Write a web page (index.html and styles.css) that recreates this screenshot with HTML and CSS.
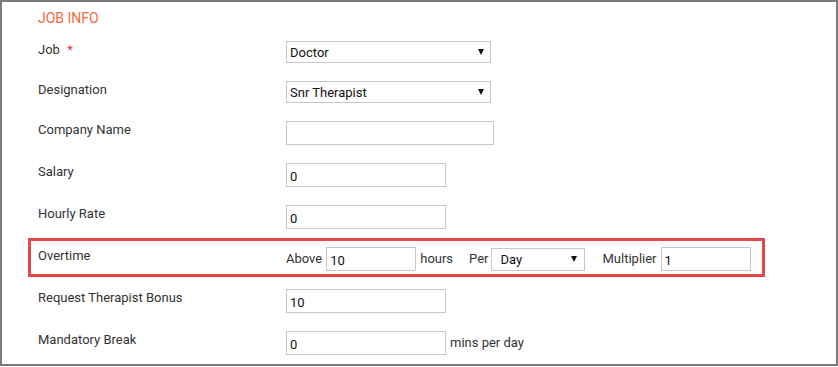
FILE: index.html
```html
<!DOCTYPE html>
<html>
<head>
<meta charset="utf-8">
<link rel="stylesheet" href="styles.css">
</head>
<body>
<div class="panel">
  <div class="heading">JOB INFO</div>

  <div class="row">
    <div class="label">Job <span class="req">*</span></div>
    <div class="ctrl">
      <span class="sel w205"><select><option>Doctor</option></select></span>
    </div>
  </div>

  <div class="row">
    <div class="label">Designation</div>
    <div class="ctrl">
      <span class="sel w205"><select><option>Snr Therapist</option></select></span>
    </div>
  </div>

  <div class="row">
    <div class="label">Company Name</div>
    <div class="ctrl"><input class="txt w208" type="text" value=""></div>
  </div>

  <div class="row">
    <div class="label">Salary</div>
    <div class="ctrl"><input class="txt w160" type="text" value="0"></div>
  </div>

  <div class="row">
    <div class="label">Hourly Rate</div>
    <div class="ctrl"><input class="txt w160" type="text" value="0"></div>
  </div>

  <div class="row overtime">
    <div class="label">Overtime</div>
    <div class="ctrl">
      <span class="word">Above</span>
      <input class="txt w90" type="text" value="10">
      <span class="word">hours</span>
      <span class="word per">Per</span>
      <span class="sel w94 pad"><select><option>Day</option></select></span>
      <span class="word mult">Multiplier</span>
      <input class="txt w90" type="text" value="1">
    </div>
  </div>

  <div class="row after">
    <div class="label">Request Therapist Bonus</div>
    <div class="ctrl"><input class="txt w160" type="text" value="10"></div>
  </div>

  <div class="row">
    <div class="label">Mandatory Break</div>
    <div class="ctrl">
      <input class="txt w160" type="text" value="0">
      <span class="word">mins per day</span>
    </div>
  </div>
</div>
</body>
</html>
```

FILE: styles.css
```css
html, body {
  margin: 0;
  padding: 0;
  background: #ffffff;
}

.panel {
  box-sizing: border-box;
  width: 838px;
  height: 366px;
  border: 2px solid #7a7a7a;
  padding: 8px 0 0 26px;
  overflow: hidden;
  font-family: Roboto, "Liberation Sans", Arial, sans-serif;
  font-size: 13px;
  color: #333333;
}

.heading {
  padding-left: 10px;
  font-size: 14px;
  line-height: 16px;
  color: #f26a3b;
}

.row {
  box-sizing: border-box;
  width: 737px;
  display: flex;
  align-items: flex-start;
  padding-left: 10px;
  margin-top: 18px;
}

.heading + .row {
  margin-top: 15px;
}

.row.overtime {
  margin-top: 9px;
  border: 3px solid #e5484a;
  padding: 6px 0 3px 7px;
}

.row.after {
  margin-top: 12px;
}

.label {
  width: 248px;
  flex: none;
  line-height: 16px;
  padding-top: 1px;
}

.req {
  color: #e8323c;
  margin-left: 4px;
}

.ctrl {
  display: flex;
  align-items: center;
}

.txt {
  box-sizing: border-box;
  height: 24px;
  margin: 0;
  border: 1px solid #c8c8c8;
  border-radius: 0;
  padding: 2px 0 0 3px;
  background: #ffffff;
  font-family: Roboto, "Liberation Sans", Arial, sans-serif;
  font-size: 13px;
  color: #111111;
  outline: none;
}

.w208 { width: 208px; }
.w160 { width: 160px; }
.w90 { width: 90px; }

.sel {
  position: relative;
  display: inline-block;
  height: 22px;
}

.sel select {
  box-sizing: border-box;
  width: 100%;
  height: 22px;
  margin: 0;
  border: 1px solid #c8c8c8;
  border-radius: 0;
  padding: 1px 0 0 3px;
  background: #ffffff;
  -webkit-appearance: none;
  appearance: none;
  font-family: Roboto, "Liberation Sans", Arial, sans-serif;
  font-size: 13px;
  color: #111111;
  outline: none;
}

.sel::after {
  content: "";
  position: absolute;
  right: 7px;
  top: 8px;
  width: 0;
  height: 0;
  border-left: 3.5px solid transparent;
  border-right: 3.5px solid transparent;
  border-top: 6px solid #111111;
  pointer-events: none;
}

.w205 { width: 205px; }
.w94 { width: 94px; }

.sel.pad,
.sel.pad select {
  height: 23px;
}

.sel.pad select {
  padding-left: 9px;
}

.sel.pad::after {
  right: 8px;
}

.word {
  line-height: 16px;
  margin-left: 4px;
  margin-right: 4px;
}

.ctrl .word:first-child {
  margin-left: 0;
}

.word.per {
  margin-left: 12px;
  margin-right: 2px;
}

.word.mult {
  margin-left: 18px;
}
```
